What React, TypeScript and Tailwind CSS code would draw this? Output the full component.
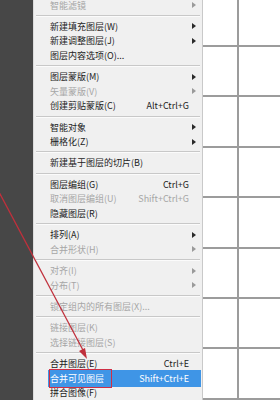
type Item = {
  label?: string;
  shortcut?: string;
  arrow?: boolean;
  disabled?: boolean;
  active?: boolean;
  sep?: boolean;
};

const items: Item[] = [
  { label: '智能滤镜', arrow: true, disabled: true },
  { sep: true },
  { label: '新建填充图层(W)', arrow: true },
  { label: '新建调整图层(J)', arrow: true },
  { label: '图层内容选项(O)...' },
  { sep: true },
  { label: '图层蒙版(M)', arrow: true },
  { label: '矢量蒙版(V)', arrow: true, disabled: true },
  { label: '创建剪贴蒙版(C)', shortcut: 'Alt+Ctrl+G' },
  { sep: true },
  { label: '智能对象', arrow: true },
  { label: '栅格化(Z)', arrow: true },
  { sep: true },
  { label: '新建基于图层的切片(B)' },
  { sep: true },
  { label: '图层编组(G)', shortcut: 'Ctrl+G' },
  { label: '取消图层编组(U)', shortcut: 'Shift+Ctrl+G', disabled: true },
  { label: '隐藏图层(R)' },
  { sep: true },
  { label: '排列(A)', arrow: true },
  { label: '合并形状(H)', arrow: true, disabled: true },
  { sep: true },
  { label: '对齐(I)', arrow: true, disabled: true },
  { label: '分布(T)', arrow: true, disabled: true },
  { sep: true },
  { label: '锁定组内的所有图层(X)...', disabled: true },
  { sep: true },
  { label: '链接图层(K)', disabled: true },
  { label: '选择链接图层(S)', disabled: true },
  { sep: true },
  { label: '合并图层(E)', shortcut: 'Ctrl+E' },
  { label: '合并可见图层', shortcut: 'Shift+Ctrl+E', active: true },
  { label: '拼合图像(F)' },
];

function MenuRow({ item }: { item: Item }) {
  if (item.sep) {
    return (
      <div className="h-[7.2px] flex flex-col justify-center mx-[2px]">
        <div className="h-px bg-[#c8c8c8]" />
        <div className="h-px bg-[#fbfbfb]" />
      </div>
    );
  }
  const tone = item.active
    ? 'text-white'
    : item.disabled
      ? 'text-[#a6a6a6]'
      : 'text-[#1c1c1c]';
  return (
    <div className={`relative h-[14.6px] shrink-0 flex items-center pl-[16px] pr-[6px] ${tone}`}>
      {item.active && (
        <div className="absolute left-[14px] right-[1px] top-[-0.5px] bottom-[-2px] bg-[#3f95e6]" />
      )}
      {item.active && (
        <div className="absolute left-[15px] w-[63px] top-[-1.5px] bottom-[-2.5px] border-[1.5px] border-[#cf2f45]" />
      )}
      <span className="relative flex-1 whitespace-nowrap">{item.label}</span>
      {item.shortcut && <span className="relative whitespace-nowrap">{item.shortcut}</span>}
      <span className="relative w-[4px] ml-[3px] flex items-center">
        {item.arrow && (
          <svg width="4" height="6" viewBox="0 0 4 6">
            <path d="M0 0 L4 3 L0 6 Z" fill={item.disabled ? '#9a9a9a' : '#2a2a2a'} />
          </svg>
        )}
      </span>
    </div>
  );
}

function GridRow({ h, top }: { h: string; top: boolean }) {
  return (
    <div className={`flex shrink-0 ${h} ${top ? 'border-t-2 border-[#9c9c9c]' : ''}`}>
      <div className="w-[34px] bg-white" />
      <div className="w-[2px] bg-[#9c9c9c]" />
      <div className="flex-1 bg-white" />
    </div>
  );
}

export default function App() {
  return (
    <div className="relative w-[280px] h-[400px] overflow-hidden flex bg-white text-[9px] leading-none" style={{ fontFamily: '"Noto Sans CJK SC", "Noto Sans", sans-serif' }}>
      <div className="w-[33px] shrink-0 bg-[#474747]" />
      <div className="w-[170px] shrink-0 bg-[#f0f0f0] border-l border-[#dcdcdc] border-r border-r-[#c9c9c9] flex flex-col -mt-[2.3px]">
        {items.map((item, i) => (
          <MenuRow key={i} item={item} />
        ))}
      </div>
      <div className="flex-1 flex flex-col">
        <GridRow h="h-[45px]" top={false} />
        {Array.from({ length: 8 }).map((_, i) => (
          <GridRow key={i} h="h-[50.4px]" top />
        ))}
      </div>
      <svg className="absolute inset-0 pointer-events-none" width="280" height="400">
        <line x1="-2" y1="190" x2="84" y2="352" stroke="#c0303c" strokeWidth="1.3" />
        <path d="M87 359 L79 351 L85 348 Z" fill="#c0303c" />
      </svg>
    </div>
  );
}
